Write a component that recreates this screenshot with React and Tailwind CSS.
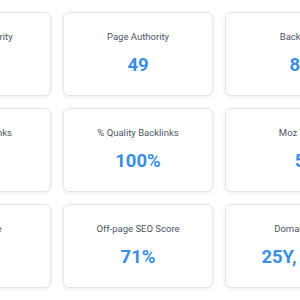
import React from "react";

const stats = [
  { label: "Domain Authority", value: "42" },
  { label: "Page Authority", value: "49" },
  { label: "Backlinks", value: "82" },
  { label: "Quality Backlinks", value: "12" },
  { label: "% Quality Backlinks", value: "100%" },
  { label: "Moz Trust", value: "5" },
  { label: "Spam Score", value: "1%" },
  { label: "Off-page SEO Score", value: "71%" },
  { label: "Domain Age", value: "25Y, 10M" },
];

const StatCard = ({ label, value }) => (
  <div className="h-[84px] rounded-[6px] border border-[#e6e6e6] bg-white shadow-[0_1px_4px_rgba(0,0,0,0.08)] pt-[18px] flex flex-col items-center">
    <p className="text-[9.5px] leading-[12px] text-[#4b5563] whitespace-nowrap">{label}</p>
    <p className="mt-[10px] text-[18.5px] leading-[24px] font-bold text-[#3a8ee6] whitespace-nowrap">{value}</p>
  </div>
);

export default function App() {
  return (
    <div className="w-[300px] h-[300px] overflow-hidden bg-white font-['Roboto',sans-serif]">
      {/* stats grid, shifted left so the first column is cut */}
      <div className="-ml-[99px] pt-[12px] grid grid-cols-[repeat(3,150px)] gap-3">
        {stats.map((s) => (
          <StatCard key={s.label} label={s.label} value={s.value} />
        ))}
      </div>
    </div>
  );
}
